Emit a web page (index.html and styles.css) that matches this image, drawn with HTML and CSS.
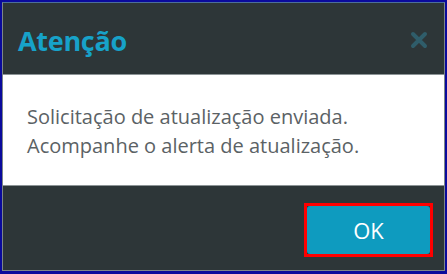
FILE: index.html
```html
<!DOCTYPE html>
<html lang="pt-BR">
<head>
  <meta charset="UTF-8">
  <title>Atenção</title>
  <link rel="stylesheet" href="styles.css">
</head>
<body>
  <div class="modal">
    <header class="modal-header">
      <h1>Atenção</h1>
      <svg class="close" width="18" height="18" viewBox="0 0 18 18">
        <path d="M3 3 L15 15 M15 3 L3 15" stroke="#2f5d6a" stroke-width="4" stroke-linecap="round"/>
      </svg>
    </header>
    <div class="modal-body">
      <p>Solicitação de atualização enviada.<br>Acompanhe o alerta de atualização.</p>
    </div>
    <footer class="modal-footer">
      <div class="highlight">
        <button class="btn-ok">OK</button>
      </div>
    </footer>
  </div>
</body>
</html>
```

FILE: styles.css
```css
html, body {
  margin: 0;
  padding: 0;
}
body {
  width: 447px;
  height: 274px;
  background: #0a0a9c;
  font-family: "Open Sans", "Noto Sans", sans-serif;
  padding: 2px 2px 3px 2px;
  box-sizing: border-box;
}
.modal {
  height: 100%;
  box-sizing: border-box;
  border: 1px solid #7d8688;
  border-top: 1px solid #4d6f9a;
  background: #2d3638;
  display: flex;
  flex-direction: column;
}
.modal-header {
  height: 72px;
  display: flex;
  align-items: center;
  justify-content: space-between;
  padding: 3px 16px 0 15px;
  box-sizing: border-box;
  border-bottom: 1px solid #8c9496;
}
.modal-header h1 {
  margin: 0;
  font-size: 27px;
  font-weight: 700;
  color: #17a2c9;
  letter-spacing: -0.3px;
}
.close {
  display: block;
}
.modal-body {
  background: #fff;
  height: 110px;
  padding: 0 24px;
  box-sizing: border-box;
}
.modal-body p {
  margin: 0;
  padding-top: 27px;
  font-size: 20px;
  line-height: 29px;
  color: #5b6265;
}
.modal-footer {
  flex: 1;
  display: flex;
  justify-content: flex-end;
  padding: 17px 11px 0 0;
  border-top: 1px solid #8c9496;
}
.highlight {
  border: 3px solid #ff0000;
  height: 48px;
  width: 123px;
}
.btn-ok {
  width: 100%;
  height: 100%;
  border: none;
  border-radius: 3px;
  background: #0e9bbf;
  color: #fff;
  font-family: inherit;
  font-size: 22px;
  padding: 0;
}
```
